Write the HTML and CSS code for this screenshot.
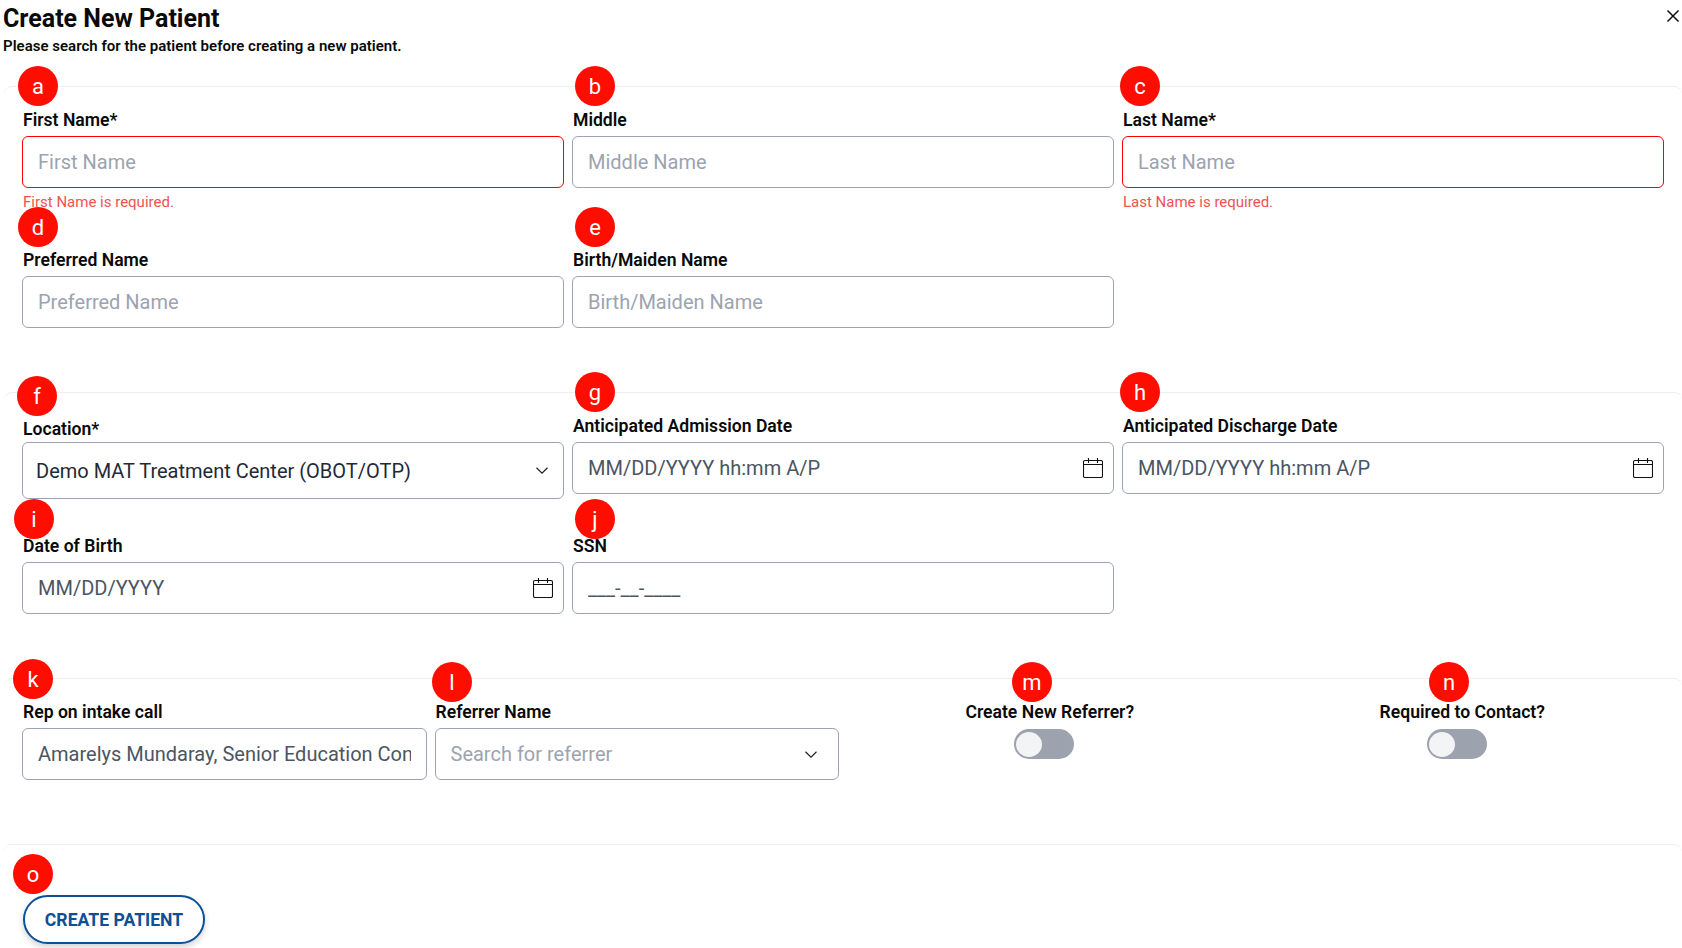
FILE: index.html
```html
<!DOCTYPE html>
<html lang="en">
<head>
<meta charset="utf-8">
<title>Create New Patient</title>
<link rel="stylesheet" href="styles.css">
</head>
<body>
<main class="modal">
  <button class="close" aria-label="Close"><svg viewBox="0 0 14 14" width="14" height="14"><path d="M1.5 1.5l11 11M12.5 1.5l-11 11" fill="none" stroke="#111" stroke-width="1.5"/></svg></button>
  <header class="head">
    <h1 class="title">Create New Patient</h1>
    <p class="subtitle">Please search for the patient before creating a new patient.</p>
  </header>

  <section class="section grid-3">
    <div class="field"><span class="badge b-a">a</span><label class="label">First Name*</label><input class="input input-error" placeholder="First Name"><p class="error">First Name is required.</p></div>
    <div class="field"><span class="badge b-b">b</span><label class="label">Middle</label><input class="input" placeholder="Middle Name"></div>
    <div class="field"><span class="badge b-c">c</span><label class="label">Last Name*</label><input class="input input-error" placeholder="Last Name"><p class="error">Last Name is required.</p></div>
    <div class="field"><span class="badge b-d">d</span><label class="label">Preferred Name</label><input class="input" placeholder="Preferred Name"></div>
    <div class="field"><span class="badge b-e">e</span><label class="label">Birth/Maiden Name</label><input class="input" placeholder="Birth/Maiden Name"></div>
  </section>

  <section class="section grid-3">
    <div class="field"><span class="badge b-f">f</span><label class="label label-low">Location*</label>
      <div class="select select-tall"><span class="select-value">Demo MAT Treatment Center (OBOT/OTP)</span><svg class="chevron" viewBox="0 0 12 7" width="12" height="7"><path d="M.5.8L6 6.2 11.500.8" fill="none" stroke="#222" stroke-width="1.2"/></svg></div></div>
    <div class="field"><span class="badge b-g">g</span><label class="label">Anticipated Admission Date</label>
      <div class="date"><input class="input input-dark" placeholder="MM/DD/YYYY hh:mm A/P"><svg class="calendar" viewBox="0 0 20 20" width="20" height="20"><path d="M2 2.500h16a1.500 1.500 0 0 1 1.500 1.500v14a1.500 1.500 0 0 1-1.500 1.500H2A1.500 1.500 0 0 1 .5 18V4A1.500 1.500 0 0 1 2 2.500zM.5 6.500h19M5.500 0v5M14.500 0v5" fill="none" stroke="#111" stroke-width="1.1"/></svg></div></div>
    <div class="field"><span class="badge b-h">h</span><label class="label">Anticipated Discharge Date</label>
      <div class="date"><input class="input input-dark" placeholder="MM/DD/YYYY hh:mm A/P"><svg class="calendar" viewBox="0 0 20 20" width="20" height="20"><path d="M2 2.500h16a1.500 1.500 0 0 1 1.500 1.500v14a1.500 1.500 0 0 1-1.500 1.500H2A1.500 1.500 0 0 1 .5 18V4A1.500 1.500 0 0 1 2 2.500zM.5 6.500h19M5.500 0v5M14.500 0v5" fill="none" stroke="#111" stroke-width="1.1"/></svg></div></div>
    <div class="field"><span class="badge b-i">i</span><label class="label">Date of Birth</label>
      <div class="date"><input class="input input-dark" placeholder="MM/DD/YYYY"><svg class="calendar" viewBox="0 0 20 20" width="20" height="20"><path d="M2 2.500h16a1.500 1.500 0 0 1 1.500 1.500v14a1.500 1.500 0 0 1-1.500 1.500H2A1.500 1.500 0 0 1 .5 18V4A1.500 1.500 0 0 1 2 2.500zM.5 6.500h19M5.500 0v5M14.500 0v5" fill="none" stroke="#111" stroke-width="1.1"/></svg></div></div>
    <div class="field"><span class="badge b-j">j</span><label class="label">SSN</label><input class="input input-dark" placeholder="___-__-____"></div>
  </section>

  <section class="section grid-4">
    <div class="field"><span class="badge b-k">k</span><label class="label">Rep on intake call</label><input class="input input-value" value="Amarelys Mundaray, Senior Education Consultant"></div>
    <div class="field"><span class="badge b-l">l</span><label class="label">Referrer Name</label>
      <div class="select select-search"><span class="select-placeholder">Search for referrer</span><svg class="chevron" viewBox="0 0 12 7" width="12" height="7"><path d="M.5.8L6 6.2 11.500.8" fill="none" stroke="#222" stroke-width="1.2"/></svg></div></div>
    <div class="field field-center"><span class="badge b-m">m</span><label class="label">Create New Referrer?</label><div class="toggle"><span class="knob"></span></div></div>
    <div class="field field-center"><span class="badge b-n">n</span><label class="label">Required to Contact?</label><div class="toggle"><span class="knob"></span></div></div>
  </section>

  <section class="section section-actions">
    <span class="badge b-o">o</span>
    <button class="primary">CREATE PATIENT</button>
  </section>
</main>
</body>
</html>
```

FILE: styles.css
```css
* { box-sizing: border-box; }
html, body { margin: 0; height: 948px; overflow: hidden; background: #fff; }
body { font-family: Roboto, "Liberation Sans", sans-serif; color: #000; }

.modal { height: 948px; }
.head { padding: 1px 0 0 3px; height: 86px; }
.title { margin: 0; font-size: 25px; line-height: 35px; font-weight: 700; color: #0a0a0a; }
.subtitle { margin: 0; font-size: 15px; line-height: 20px; font-weight: 600; color: #0a0a0a; letter-spacing: .02px; }

.close { position: absolute; top: 9px; right: 2px; padding: 0; border: 0; background: none; line-height: 0; }

.section { margin: 0 0 0 4px; padding: 23px 18px 0 18px; border-top: 1px solid #eceef1; border-radius: 8px 8px 0 0; }
.grid-3 { display: grid; grid-template-columns: repeat(3, 1fr); column-gap: 8px; row-gap: 37px; height: 306px; align-content: start; }
.grid-4 { display: grid; grid-template-columns: repeat(4, 1fr); column-gap: 8px; height: 166px; align-content: start; }
.grid-3 + .grid-3 { height: 286px; }
.section-actions { padding-top: 50px; padding-left: 19px; }

.field { min-width: 0; }
.field-center { text-align: center; }
.label { display: block; margin: 0 0 6px 1px; font-size: 17.6px; line-height: 20px; font-weight: 600; color: #0a0a0a; }
.label-low { margin: 3px 0 3px 1px; }

.input { display: block; width: 100%; height: 52px; padding: 0 15px; border: 1.5px solid #9ca3b4; border-radius: 6px; background: #fff; font: 400 20px Roboto, sans-serif; color: #4b5563; outline: none; }
.input::placeholder { color: #9ca3af; opacity: 1; }
.input-dark::placeholder { color: #4b5563; }
.input-error { border-color: #f00; }
.error { margin: 4px 0 1px 1px; font-size: 15px; line-height: 20px; color: #f05252; }

.select { display: flex; align-items: center; justify-content: space-between; padding: 0 15px 0 13px; border: 1.5px solid #9ca3b4; border-radius: 6px; font-size: 20px; }
.select-tall { height: 57px; }
.select-search { height: 52px; padding-left: 15px; padding-right: 21px; }
.select-value { color: #1f2937; }
.select-placeholder { color: #9ca3af; }
.chevron { flex: none; }

.date { position: relative; }
.calendar { position: absolute; right: 11px; top: 16px; }

.toggle { display: block; position: relative; width: 60px; height: 30px; margin: 7px auto 0; border-radius: 15px; background: #9ca3af; transform: translateX(-5px); }
.knob { position: absolute; left: 2px; top: 3px; width: 26px; height: 25px; border-radius: 50%; background: #f3f4f6; }

.primary { display: block; width: 182px; height: 49px; border: 2px solid #0f4f94; border-radius: 25px; background: #fff; color: #0f4f94; font: 700 17.6px Roboto, sans-serif; box-shadow: 0 3px 6px rgba(0,0,0,.18); }

.badge { position: absolute; width: 40px; height: 40px; border-radius: 50%; background: #ff0d00; color: #fff; font-size: 22px; line-height: 41px; text-align: center; font-weight: 400; }
.b-a { left: 18px; top: 66px; }
.b-b { left: 575px; top: 66px; }
.b-c { left: 1120px; top: 66px; }
.b-d { left: 18px; top: 207px; }
.b-e { left: 575px; top: 207px; }
.b-f { left: 17px; top: 376px; }
.b-g { left: 575px; top: 372px; }
.b-h { left: 1120px; top: 372px; }
.b-i { left: 14px; top: 499px; }
.b-j { left: 575px; top: 499px; }
.b-k { left: 13px; top: 659px; }
.b-l { left: 432px; top: 662px; }
.b-m { left: 1012px; top: 662px; }
.b-n { left: 1429px; top: 662px; }
.b-o { left: 13px; top: 854px; }
```
